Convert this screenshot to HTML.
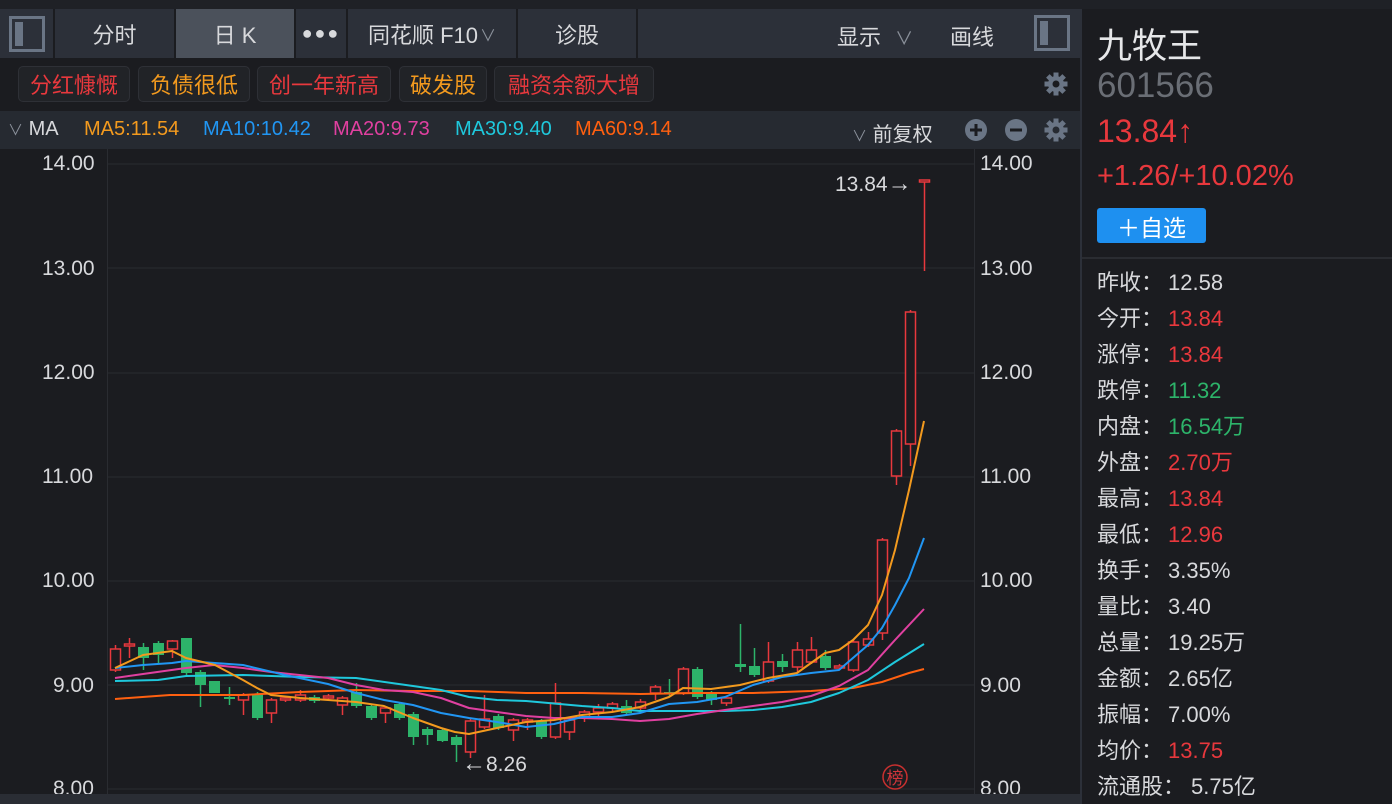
<!DOCTYPE html>
<html><head><meta charset="utf-8">
<style>
*{margin:0;padding:0;box-sizing:border-box}
body{width:1392px;height:804px;background:#1b1c20;overflow:hidden;position:relative;font-family:"Liberation Sans","Noto Sans CJK SC",sans-serif;color:#d8d9dc}
.abs{position:absolute}
.tab{position:absolute;top:9px;height:49px;background:#2c3039;border-right:2px solid #1b1c20;font-size:22px;color:#d8d9dc;display:flex;align-items:center;justify-content:center}
.tag{position:absolute;top:66px;height:36px;background:#212327;border:1px solid #2e3036;border-radius:5px;font-size:22px;display:flex;align-items:center;justify-content:center}
.r{color:#e8383d}.o{color:#f39a1e}.g{color:#2db46a}
.row{position:absolute;left:1097px;font-size:22px;line-height:24px;white-space:nowrap}
.row b{font-weight:normal;display:inline-block;width:71px}
.ax{position:absolute;font-size:21px;color:#d8d9dc}
.ma{position:absolute;top:118px;font-size:20px;white-space:nowrap}
</style></head><body>
<div class="abs" style="left:0;top:0;width:1392px;height:9px;background:#1f2126"></div>
<div class="abs" style="left:0;top:9px;width:1080px;height:49px;background:#2c3039"></div>
<div class="tab" style="left:0;width:55px"><div style="width:36px;height:36px;border:3px solid #6a7585;position:relative"><div style="position:absolute;left:3px;top:3px;width:8px;height:24px;background:#6a7585"></div></div></div>
<div class="tab" style="left:55px;width:121px">分时</div>
<div class="tab" style="left:176px;width:120px;background:#4b515b">日 K</div>
<div class="tab" style="left:296px;width:52px;font-size:18px;letter-spacing:2px">●●●</div>
<div class="tab" style="left:348px;width:170px">同花顺 F10<span style="color:#8a909a;font-size:16px;margin-left:2px">∨</span></div>
<div class="tab" style="left:518px;width:120px">诊股</div>
<div class="abs" style="left:837px;top:20px;font-size:22px">显示 <span style="color:#8a909a;font-size:18px;margin-left:8px">∨</span></div>
<div class="abs" style="left:950px;top:20px;font-size:22px">画线</div>
<div class="abs" style="left:1034px;top:15px;width:36px;height:36px;border:3px solid #6a7585"><div style="position:absolute;left:3px;top:3px;width:8px;height:24px;background:#6a7585"></div></div>
<div class="abs" style="left:0;top:58px;width:1080px;height:52px;background:#1b1c20"></div>
<div class="tag r" style="left:18px;width:112px">分红慷慨</div>
<div class="tag o" style="left:138px;width:112px">负债很低</div>
<div class="tag r" style="left:257px;width:134px">创一年新高</div>
<div class="tag o" style="left:399px;width:88px">破发股</div>
<div class="tag r" style="left:494px;width:160px">融资余额大增</div>
<div class="abs" style="left:0;top:111px;width:1080px;height:38px;background:#262a31"></div>
<div class="ma" style="left:8px"><span style="color:#8a909a;font-size:15px">∨</span> MA</div>
<div class="ma o" style="left:84px">MA5:11.54</div>
<div class="ma" style="left:203px;color:#2196f3">MA10:10.42</div>
<div class="ma" style="left:333px;color:#e040a0">MA20:9.73</div>
<div class="ma" style="left:455px;color:#1fc8dc">MA30:9.40</div>
<div class="ma" style="left:575px;color:#ff6010">MA60:9.14</div>
<div class="abs" style="left:852px;top:118px;font-size:20px"><span style="color:#8a909a;font-size:15px">∨</span> 前复权</div>
<svg class="abs" style="left:0;top:0" width="1392" height="804">
<g fill="#6a7585">
<circle cx="976" cy="130" r="11"/><circle cx="1016" cy="130" r="11"/>
</g>
<path d="M970 130h12M976 124v12M1010 130h12" stroke="#1b1c20" stroke-width="3"/>
<g id="gears"></g>
<g stroke="#2a2c31" stroke-width="1">
<line x1="107" y1="164" x2="974" y2="164"/><line x1="107" y1="268" x2="974" y2="268"/><line x1="107" y1="373" x2="974" y2="373"/><line x1="107" y1="477" x2="974" y2="477"/><line x1="107" y1="581" x2="974" y2="581"/><line x1="107" y1="685" x2="974" y2="685"/><line x1="107" y1="789" x2="974" y2="789"/>
<line x1="107.5" y1="149" x2="107.5" y2="794"/><line x1="974.5" y1="149" x2="974.5" y2="794"/>
</g>
<g id="candles"></g>
<g fill="none" stroke-width="2" stroke-linejoin="round">
<polyline stroke="#ff6010" points="115,699 170,695 243,695 300,692 356,690 413,691 469,691 526,693 582,693 640,694 697,693 753,693 811,691 853,688 882,682 909,673 924,669"/>
<polyline stroke="#1fc8dc" points="115,681 158,680 186,676 243,675 300,677 356,678 413,686 441,690 469,697 497,700 526,701 582,706 612,708 640,711 669,711 697,711 725,711 753,710 782,707 811,702 839,693 868,680 895,662 924,644"/>
<polyline stroke="#e040a0" points="115,678 143,674 186,668 214,665 243,668 271,672 328,678 356,685 384,690 413,692 441,698 469,708 497,712 526,716 554,718 582,718 612,719 640,721 669,719 697,714 725,710 753,706 782,702 811,696 839,686 868,670 895,640 924,609"/>
<polyline stroke="#2196f3" points="115,668 143,665 172,663 186,661 215,663 243,665 285,675 328,684 356,693 384,700 413,705 441,713 469,718 497,722 526,727 554,724 582,717 612,717 640,713 669,704 697,702 725,697 753,685 782,677 811,673 839,670 868,645 882,628 895,605 909,578 924,538"/>
<polyline stroke="#f39a1e" points="115,668 143,655 172,651 186,658 215,665 243,680 257,688 271,695 300,698 328,700 356,702 384,706 413,718 441,728 455,732 469,734 497,728 526,722 554,720 582,715 612,712 640,707 669,697 683,688 711,689 740,685 768,678 797,673 811,663 825,653 839,650 853,640 868,625 882,595 895,550 909,490 924,421"/>
</g>
<circle cx="895" cy="777" r="12" fill="none" stroke="#c8302f" stroke-width="1.5"/>
<text x="895" y="784" fill="#d0353a" font-size="17" text-anchor="middle" font-family="Noto Sans CJK SC, sans-serif">榜</text>
</svg>
<div class="ax" style="left:835px;top:170px">13.84<span style="font-size:24px">→</span></div>
<div class="ax" style="left:462px;top:750px"><span style="font-size:24px">←</span>8.26</div>
<div class="ax" style="left:42px;top:152px">14.00</div>
<div class="ax" style="left:42px;top:257px">13.00</div>
<div class="ax" style="left:42px;top:361px">12.00</div>
<div class="ax" style="left:42px;top:465px">11.00</div>
<div class="ax" style="left:42px;top:569px">10.00</div>
<div class="ax" style="left:53px;top:674px">9.00</div>
<div class="ax" style="left:53px;top:777px">8.00</div>
<div class="ax" style="left:980px;top:152px">14.00</div>
<div class="ax" style="left:980px;top:257px">13.00</div>
<div class="ax" style="left:980px;top:361px">12.00</div>
<div class="ax" style="left:980px;top:465px">11.00</div>
<div class="ax" style="left:980px;top:569px">10.00</div>
<div class="ax" style="left:980px;top:674px">9.00</div>
<div class="ax" style="left:980px;top:777px">8.00</div>
<div class="abs" style="left:0;top:794px;width:1080px;height:10px;background:#2a2d34"></div>
<div class="abs" style="left:1080px;top:9px;width:2px;height:795px;background:#2c3039"></div>
<div class="abs" style="left:1097px;top:18px;font-size:35px;color:#e6e7e9">九牧王</div>
<div class="abs" style="left:1097px;top:66px;font-size:35px;color:#6a6e75">601566</div>
<div class="abs r" style="left:1097px;top:113px;font-size:32px">13.84↑</div>
<div class="abs r" style="left:1097px;top:160px;font-size:29px">+1.26/+10.02%</div>
<div class="abs" style="left:1097px;top:208px;width:109px;height:35px;background:#1e90f0;border-radius:3px;color:#fff;font-size:23px;display:flex;align-items:center;justify-content:center">＋自选</div>
<div class="abs" style="left:1082px;top:257px;width:310px;height:2px;background:#2a2c31"></div>
<div class="row" style="top:271px"><b>昨收：</b>12.58</div>
<div class="row" style="top:307px"><b>今开：</b><span class="r">13.84</span></div>
<div class="row" style="top:343px"><b>涨停：</b><span class="r">13.84</span></div>
<div class="row" style="top:379px"><b>跌停：</b><span class="g">11.32</span></div>
<div class="row" style="top:415px"><b>内盘：</b><span class="g">16.54万</span></div>
<div class="row" style="top:451px"><b>外盘：</b><span class="r">2.70万</span></div>
<div class="row" style="top:487px"><b>最高：</b><span class="r">13.84</span></div>
<div class="row" style="top:523px"><b>最低：</b><span class="r">12.96</span></div>
<div class="row" style="top:559px"><b>换手：</b>3.35%</div>
<div class="row" style="top:595px"><b>量比：</b>3.40</div>
<div class="row" style="top:631px"><b>总量：</b>19.25万</div>
<div class="row" style="top:667px"><b>金额：</b>2.65亿</div>
<div class="row" style="top:703px"><b>振幅：</b>7.00%</div>
<div class="row" style="top:739px"><b>均价：</b><span class="r">13.75</span></div>
<div class="row" style="top:775px"><b style="width:94px">流通股：</b>5.75亿</div>
<script>
var NS="http://www.w3.org/2000/svg";
var d=[[649,670,645,672,1],[644,646,638,658,1],[647,658,643,670,0],[643,655,641,663,0],[641,649,640,658,1],[638,673,638,675,0],[672,685,670,707,0],[681,693,681,693,0],[697,699,687,705,0],[695,700,693,715,1],[694,718,692,720,0],[700,713,698,723,1],[698,700,696,702,1],[695,700,690,702,1],[697,701,695,703,0],[696,698,694,700,1],[698,705,696,715,1],[692,706,683,708,0],[706,718,704,720,0],[708,713,706,723,1],[704,718,702,720,0],[714,737,712,745,0],[729,735,727,745,0],[730,741,728,742,0],[737,745,735,762,0],[721,752,719,758,1],[719,727,695,729,1],[716,728,714,730,0],[720,730,718,741,1],[720,722,718,730,1],[721,737,719,739,0],[703,737,683,739,1],[720,732,718,740,1],[712,718,710,722,1],[708,712,704,716,1],[704,708,702,712,1],[706,713,700,715,0],[702,708,699,710,1],[687,693,685,700,1],[692,694,679,697,0],[669,693,667,695,1],[669,697,667,699,0],[693,700,691,705,0],[698,703,696,706,1],[664,667,624,672,0],[666,675,648,677,0],[662,681,642,683,1],[661,667,654,672,0],[650,667,642,673,1],[650,662,637,664,1],[656,668,650,670,0],[666,668,664,670,1],[642,670,640,672,1],[639,645,632,647,1],[540,633,538,640,1],[431,476,429,485,1],[312,444,310,466,1],[180,182,180,271,1]];
var g=document.getElementById("candles");
d.forEach(function(c,i){var x=Math.round(115+i*14.2)+0.5;var col=c[4]?"#e8383d":"#2db46a";
var l=document.createElementNS(NS,"line");l.setAttribute("x1",x);l.setAttribute("x2",x);l.setAttribute("y1",c[2]);l.setAttribute("y2",c[3]);l.setAttribute("stroke",col);l.setAttribute("stroke-width","1.5");g.appendChild(l);
var r=document.createElementNS(NS,"rect");var h=Math.max(c[1]-c[0],1.5);
if(c[4]){r.setAttribute("x",x-5);r.setAttribute("y",c[0]);r.setAttribute("width",10);r.setAttribute("height",h);r.setAttribute("fill","#1b1c20");r.setAttribute("stroke",col);r.setAttribute("stroke-width","1.5");}
else{r.setAttribute("x",x-5.5);r.setAttribute("y",c[0]);r.setAttribute("width",11);r.setAttribute("height",h);r.setAttribute("fill",col);}
g.appendChild(r);});
var gg=document.getElementById("gears");
[[1056,84],[1056,130]].forEach(function(p){
for(var k=0;k<4;k++){var t=document.createElementNS(NS,"rect");t.setAttribute("x",p[0]-2.5);t.setAttribute("y",p[1]-11.5);t.setAttribute("width",5);t.setAttribute("height",23);t.setAttribute("fill","#6a7585");t.setAttribute("transform","rotate("+(k*45)+" "+p[0]+" "+p[1]+")");gg.appendChild(t);}
var c1=document.createElementNS(NS,"circle");c1.setAttribute("cx",p[0]);c1.setAttribute("cy",p[1]);c1.setAttribute("r",8);c1.setAttribute("fill","#6a7585");gg.appendChild(c1);
var c2=document.createElementNS(NS,"circle");c2.setAttribute("cx",p[0]);c2.setAttribute("cy",p[1]);c2.setAttribute("r",3.5);c2.setAttribute("fill",p[1]>100?"#262a31":"#1b1c20");gg.appendChild(c2);});
</script>
</body></html>
